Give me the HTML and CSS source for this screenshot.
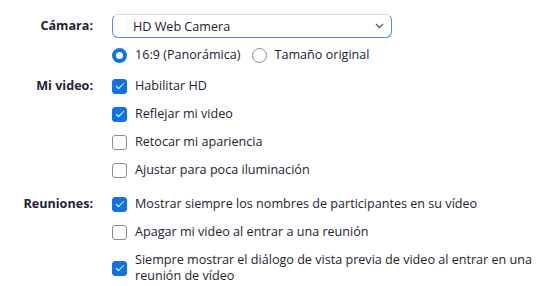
FILE: index.html
```html
<!DOCTYPE html>
<html lang="es">
<head>
    <meta charset="UTF-8">
    <title>Vídeo</title>
    <link rel="stylesheet" href="styles.css">
</head>
<body>
    <div class="settings">
        <!-- Cámara -->
        <div class="section">
            <div class="section-label label-camera">Cámara:</div>
            <div class="section-body">
                <div class="select">
                    <span class="select-value">HD Web Camera</span>
                    <svg class="select-arrow" width="9" height="6" viewBox="0 0 9 6">
                        <path d="M1 1 L4.5 4.5 L8 1" fill="none" stroke="#5f6068" stroke-width="1.4"/>
                    </svg>
                </div>
                <div class="radio-row">
                    <label class="option">
                        <span class="radio radio-on"></span>
                        <span>16:9 (Panorámica)</span>
                    </label>
                    <label class="option">
                        <span class="radio"></span>
                        <span>Tamaño original</span>
                    </label>
                </div>
            </div>
        </div>

        <!-- Mi video -->
        <div class="section section-video">
            <div class="section-label">Mi video:</div>
            <div class="section-body">
                <label class="option"><span class="check check-on"></span><span>Habilitar HD</span></label>
                <label class="option"><span class="check check-on"></span><span>Reflejar mi video</span></label>
                <label class="option"><span class="check"></span><span>Retocar mi apariencia</span></label>
                <label class="option"><span class="check"></span><span>Ajustar para poca iluminación</span></label>
            </div>
        </div>

        <!-- Reuniones -->
        <div class="section section-meetings">
            <div class="section-label">Reuniones:</div>
            <div class="section-body">
                <label class="option"><span class="check check-on"></span><span>Mostrar siempre los nombres de participantes en su vídeo</span></label>
                <label class="option"><span class="check"></span><span>Apagar mi video al entrar a una reunión</span></label>
                <label class="option option-wrap"><span class="check check-on"></span><span>Siempre mostrar el diálogo de vista previa de video al entrar en una reunión de vídeo</span></label>
            </div>
        </div>
    </div>
</body>
</html>
```

FILE: styles.css
```css
* {
    margin: 0;
    padding: 0;
    box-sizing: border-box;
}

body {
    font-family: 'Open Sans', 'Noto Sans', sans-serif;
    font-size: 12.6px;
    color: #232333;
    background: #ffffff;
}

.settings {
    padding-top: 14px;
    width: 557px;
}

.section {
    display: grid;
    grid-template-columns: 93px 1fr;
    column-gap: 19px;
}

.section-video {
    margin-top: 3px;
}

.section-meetings {
    margin-top: 6px;
}

.section-label {
    text-align: right;
    font-weight: 700;
    line-height: 28px;
}

.label-camera {
    line-height: 24px;
}

.section-body {
    display: flex;
    flex-direction: column;
    padding-right: 12px;
}

/* Select */
.select {
    width: 280px;
    height: 24px;
    border: 1px solid #4a8ee6;
    border-top-color: #d4d8de;
    border-radius: 6px;
    display: flex;
    align-items: center;
    justify-content: space-between;
    padding: 0 7px 0 20px;
}

.select-arrow {
    display: block;
}

.radio-row {
    display: flex;
    gap: 11px;
    margin-top: 3px;
}

/* Options */
.option {
    display: flex;
    align-items: center;
    gap: 8px;
    min-height: 28px;
    line-height: 16px;
}

.option-wrap {
    padding: 6px 0;
}

.radio {
    flex: none;
    width: 15px;
    height: 15px;
    border-radius: 50%;
    border: 1px solid #8a8b94;
    background: #fff;
}

.radio-on {
    border: 4px solid #0e72ed;
}

.check {
    flex: none;
    position: relative;
    width: 15px;
    height: 15px;
    border-radius: 3px;
    border: 1px solid #8a8b94;
    background: #fff;
}

.check-on {
    border-color: #0e72ed;
    background: #0e72ed;
}

.check-on::after {
    content: "";
    position: absolute;
    left: 3px;
    top: 2px;
    width: 7px;
    height: 3px;
    border-left: 1.5px solid #fff;
    border-bottom: 1.5px solid #fff;
    transform: translate(0, 1px) rotate(-45deg);
}
```
